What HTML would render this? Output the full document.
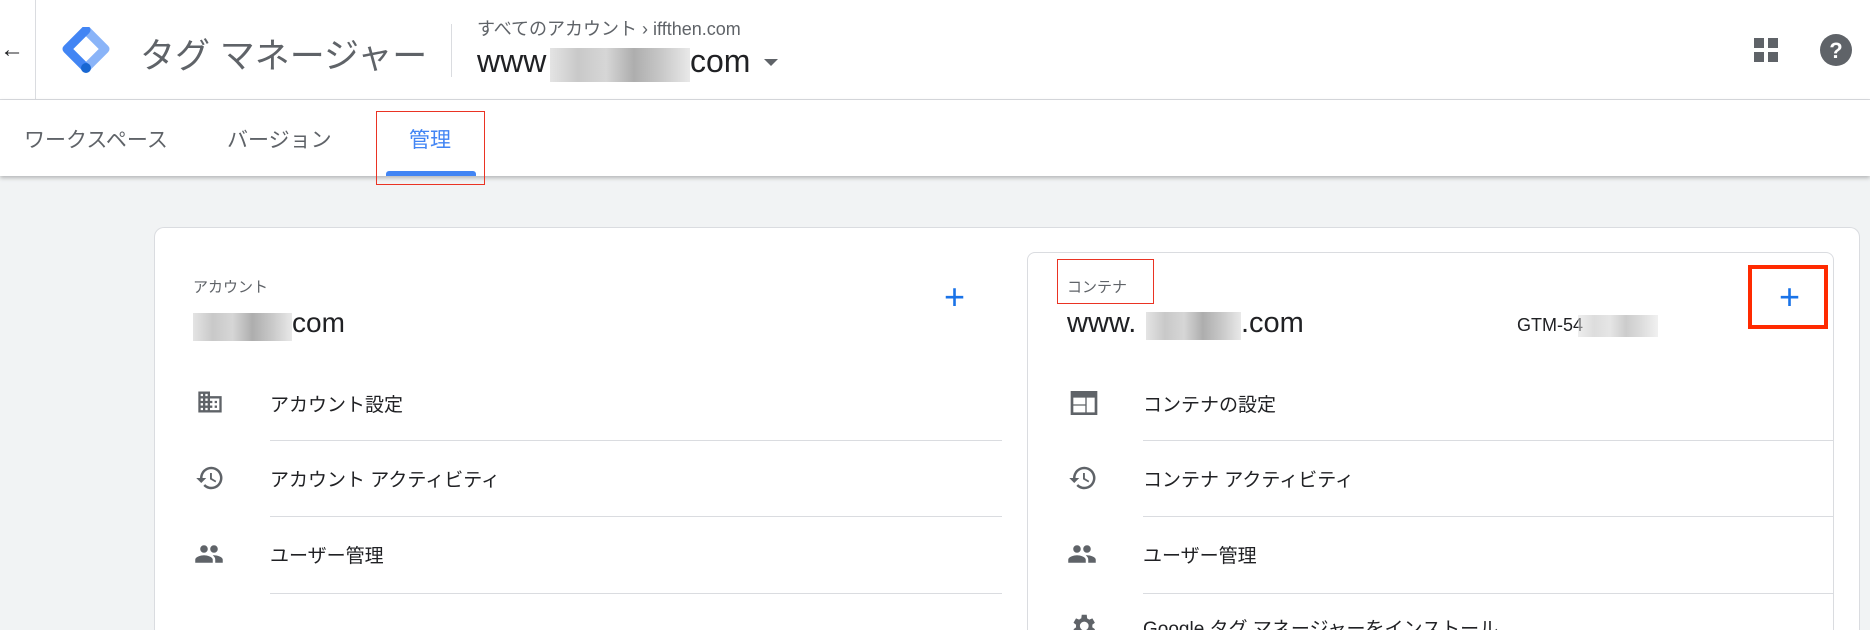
<!DOCTYPE html>
<html style="width:1870px;height:630px;overflow:hidden"><head><meta charset="utf-8"><style>
*{margin:0;padding:0;box-sizing:border-box}
body{width:1870px;height:630px;overflow:hidden;background:#f1f3f4;font-family:"Liberation Sans","Noto Sans CJK JP",sans-serif;position:relative;color:#202124}
.a{position:absolute;white-space:nowrap}
.blur{position:absolute;background:linear-gradient(90deg,#ddd,#bbb,#ccc,#999,#bbb,#e3e3e3);opacity:.8}
.item{font-size:19px;color:#202124}
.div{position:absolute;height:1px;background:#dadce0}
</style></head><body>
<div class="a" style="left:0;top:0;width:1870px;height:100px;background:#fff;border-bottom:1px solid #dadce0"></div>
<div class="a" style="left:35px;top:0;width:1px;height:100px;background:#dadce0"></div>
<div class="a" style="left:0;top:36px;font-size:24px;color:#202124">←</div>
<svg class="a" style="left:62px;top:27px" width="48" height="48" viewBox="0 0 48 48">
<path d="M24 3 L43 22 L24 41" fill="none" stroke="#8ab4f8" stroke-width="9" stroke-linejoin="round" stroke-linecap="round"/>
<path d="M24 3 L5 22 L24 41" fill="none" stroke="#4285f4" stroke-width="9" stroke-linejoin="round" stroke-linecap="round"/>
<circle cx="24" cy="41" r="5" fill="#1967d2"/></svg>
<div class="a" style="left:140px;top:28px;font-size:35px;color:#5f6368">タグ マネージャー</div>
<div class="a" style="left:451px;top:24px;width:1px;height:53px;background:#dadce0"></div>
<div class="a" style="left:477px;top:15px;font-size:18px;color:#5f6368">すべてのアカウント › iffthen.com</div>
<div class="a" style="left:477px;top:43px;font-size:32px;color:#202124">www</div>
<div class="blur" style="left:550px;top:48px;width:140px;height:34px"></div>
<div class="a" style="left:690px;top:43px;font-size:32px;color:#202124">com</div>
<div class="a" style="left:764px;top:59px;width:0;height:0;border-left:7px solid transparent;border-right:7px solid transparent;border-top:7px solid #5f6368"></div>
<svg class="a" style="left:1753px;top:37px" width="26" height="26" viewBox="0 0 26 26" fill="#5f6368"><rect x="1" y="1" width="10" height="10"/><rect x="15" y="1" width="10" height="10"/><rect x="1" y="15" width="10" height="10"/><rect x="15" y="15" width="10" height="10"/></svg>
<svg class="a" style="left:1820px;top:34px" width="32" height="32" viewBox="0 0 32 32"><circle cx="16" cy="16" r="16" fill="#5f6368"/><text x="16" y="24" text-anchor="middle" font-size="22" font-weight="bold" fill="#fff" font-family="Liberation Sans">?</text></svg>
<div class="a" style="left:0;top:100px;width:1870px;height:76px;background:#fff;box-shadow:0 2px 4px rgba(0,0,0,.25)"></div>
<div class="a" style="left:24px;top:124px;font-size:21px;color:#5f6368">ワークスペース</div>
<div class="a" style="left:227px;top:124px;font-size:21px;color:#5f6368">バージョン</div>
<div class="a" style="left:409px;top:124px;font-size:21px;color:#4285f4">管理</div>
<div class="a" style="left:386px;top:171px;width:90px;height:5px;background:#4285f4;border-radius:3px 3px 0 0"></div>
<div class="a" style="left:376px;top:111px;width:109px;height:74px;border:1.5px solid #ea3323"></div>
<div class="a" style="left:154px;top:227px;width:1706px;height:403px;background:#fff;border:1px solid #dadce0;border-bottom:none;border-radius:10px 10px 0 0"></div>
<div class="a" style="left:193px;top:276px;font-size:15px;color:#5f6368">アカウント</div>
<div class="blur" style="left:193px;top:313px;width:99px;height:28px"></div>
<div class="a" style="left:292px;top:307px;font-size:28px">com</div>
<div class="a" style="left:944px;top:276px;font-size:36px;color:#1a73e8;font-weight:300">+</div>
<svg class="a" style="left:196px;top:388px" width="28" height="28" viewBox="0 0 24 24" fill="#5f6368"><path d="M12 7V3H2v18h20V7H12zM6 19H4v-2h2v2zm0-4H4v-2h2v2zm0-4H4V9h2v2zm0-4H4V5h2v2zm4 12H8v-2h2v2zm0-4H8v-2h2v2zm0-4H8V9h2v2zm0-4H8V5h2v2zm10 12h-8v-2h2v-2h-2v-2h2v-2h-2V9h8v10zm-2-8h-2v2h2v-2zm0 4h-2v2h2v-2z"/></svg>
<div class="a item" style="left:270px;top:390px">アカウント設定</div>
<div class="div" style="left:270px;top:440px;width:732px"></div>
<svg class="a" style="left:195px;top:463px" width="30" height="30" viewBox="0 0 24 24" fill="#5f6368"><path d="M13 3a9 9 0 0 0-9 9H1l3.9 3.9.1.1L9 12H6c0-3.9 3.1-7 7-7s7 3.1 7 7-3.1 7-7 7c-1.9 0-3.7-.8-4.9-2.1l-1.4 1.4C8.3 20 10.5 21 13 21a9 9 0 0 0 0-18zm-1 5v5l4.3 2.5.7-1.2-3.5-2.1V8H12z"/></svg>
<div class="a item" style="left:270px;top:465px">アカウント アクティビティ</div>
<div class="div" style="left:270px;top:516px;width:732px"></div>
<svg class="a" style="left:194px;top:539px" width="30" height="30" viewBox="0 0 24 24" fill="#5f6368"><path d="M16 11c1.7 0 3-1.3 3-3s-1.3-3-3-3-3 1.3-3 3 1.3 3 3 3zm-8 0c1.7 0 3-1.3 3-3S9.7 5 8 5 5 6.3 5 8s1.3 3 3 3zm0 2c-2.3 0-7 1.2-7 3.5V19h14v-2.5C15 14.2 10.3 13 8 13zm8 0c-.3 0-.6 0-1 .1 1.2.8 2 2 2 3.4V19h6v-2.5c0-2.3-4.7-3.5-7-3.5z"/></svg>
<div class="a item" style="left:270px;top:541px">ユーザー管理</div>
<div class="div" style="left:270px;top:593px;width:732px"></div>
<div class="a" style="left:1027px;top:252px;width:807px;height:378px;border:1px solid #dadce0;border-bottom:none;border-radius:8px 8px 0 0;background:#fff"></div>
<div class="a" style="left:1067px;top:276px;font-size:15px;color:#5f6368">コンテナ</div>
<div class="a" style="left:1057px;top:259px;width:97px;height:45px;border:1.5px solid #ea3323"></div>
<div class="a" style="left:1067px;top:307px;font-size:29px">www.</div>
<div class="blur" style="left:1146px;top:312px;width:95px;height:28px"></div>
<div class="a" style="left:1241px;top:307px;font-size:29px">.com</div>
<div class="a" style="left:1517px;top:315px;font-size:18px">GTM-54</div>
<div class="blur" style="left:1578px;top:315px;width:80px;height:22px;opacity:.5"></div>
<div class="a" style="left:1779px;top:276px;font-size:36px;color:#1a73e8;font-weight:300">+</div>
<div class="a" style="left:1748px;top:265px;width:80px;height:64px;border:4px solid #ff2a00"></div>
<svg class="a" style="left:1068px;top:387px" width="32" height="32" viewBox="0 0 24 24" fill="#5f6368"><path d="M2 3h20v18H2V3zm2 5v11h9v-5H4v-1h9V8H4zm10 0v11h6V8h-6z"/></svg>
<div class="a item" style="left:1143px;top:390px">コンテナの設定</div>
<div class="div" style="left:1143px;top:440px;width:690px"></div>
<svg class="a" style="left:1068px;top:463px" width="30" height="30" viewBox="0 0 24 24" fill="#5f6368"><path d="M13 3a9 9 0 0 0-9 9H1l3.9 3.9.1.1L9 12H6c0-3.9 3.1-7 7-7s7 3.1 7 7-3.1 7-7 7c-1.9 0-3.7-.8-4.9-2.1l-1.4 1.4C8.3 20 10.5 21 13 21a9 9 0 0 0 0-18zm-1 5v5l4.3 2.5.7-1.2-3.5-2.1V8H12z"/></svg>
<div class="a item" style="left:1143px;top:465px">コンテナ アクティビティ</div>
<div class="div" style="left:1143px;top:516px;width:690px"></div>
<svg class="a" style="left:1067px;top:539px" width="30" height="30" viewBox="0 0 24 24" fill="#5f6368"><path d="M16 11c1.7 0 3-1.3 3-3s-1.3-3-3-3-3 1.3-3 3 1.3 3 3 3zm-8 0c1.7 0 3-1.3 3-3S9.7 5 8 5 5 6.3 5 8s1.3 3 3 3zm0 2c-2.3 0-7 1.2-7 3.5V19h14v-2.5C15 14.2 10.3 13 8 13zm8 0c-.3 0-.6 0-1 .1 1.2.8 2 2 2 3.4V19h6v-2.5c0-2.3-4.7-3.5-7-3.5z"/></svg>
<div class="a item" style="left:1143px;top:541px">ユーザー管理</div>
<div class="div" style="left:1143px;top:593px;width:690px"></div>
<svg class="a" style="left:1068px;top:611px" width="30" height="30" viewBox="0 0 24 24" fill="#5f6368"><path d="M19.4 13c0-.3.1-.6.1-1s0-.7-.1-1l2.1-1.6-2-3.5-2.5 1c-.5-.4-1.1-.7-1.700-1L15 3h-4l-.4 2.9c-.6.2-1.2.6-1.7 1l-2.5-1-2 3.5L6.500 11c0 .3-.1.6-.1 1s0 .7.1 1l-2.1 1.6 2 3.5 2.5-1c.5.4 1.1.7 1.7 1L11 21h4l.4-2.9c.6-.3 1.2-.6 1.7-1l2.5 1 2-3.5-2.2-1.6zM13 15.5a3.5 3.5 0 1 1 0-7 3.5 3.5 0 0 1 0 7z"/></svg>
<div class="a item" style="left:1143px;top:614px">Google タグ マネージャーをインストール</div>
</body></html>
